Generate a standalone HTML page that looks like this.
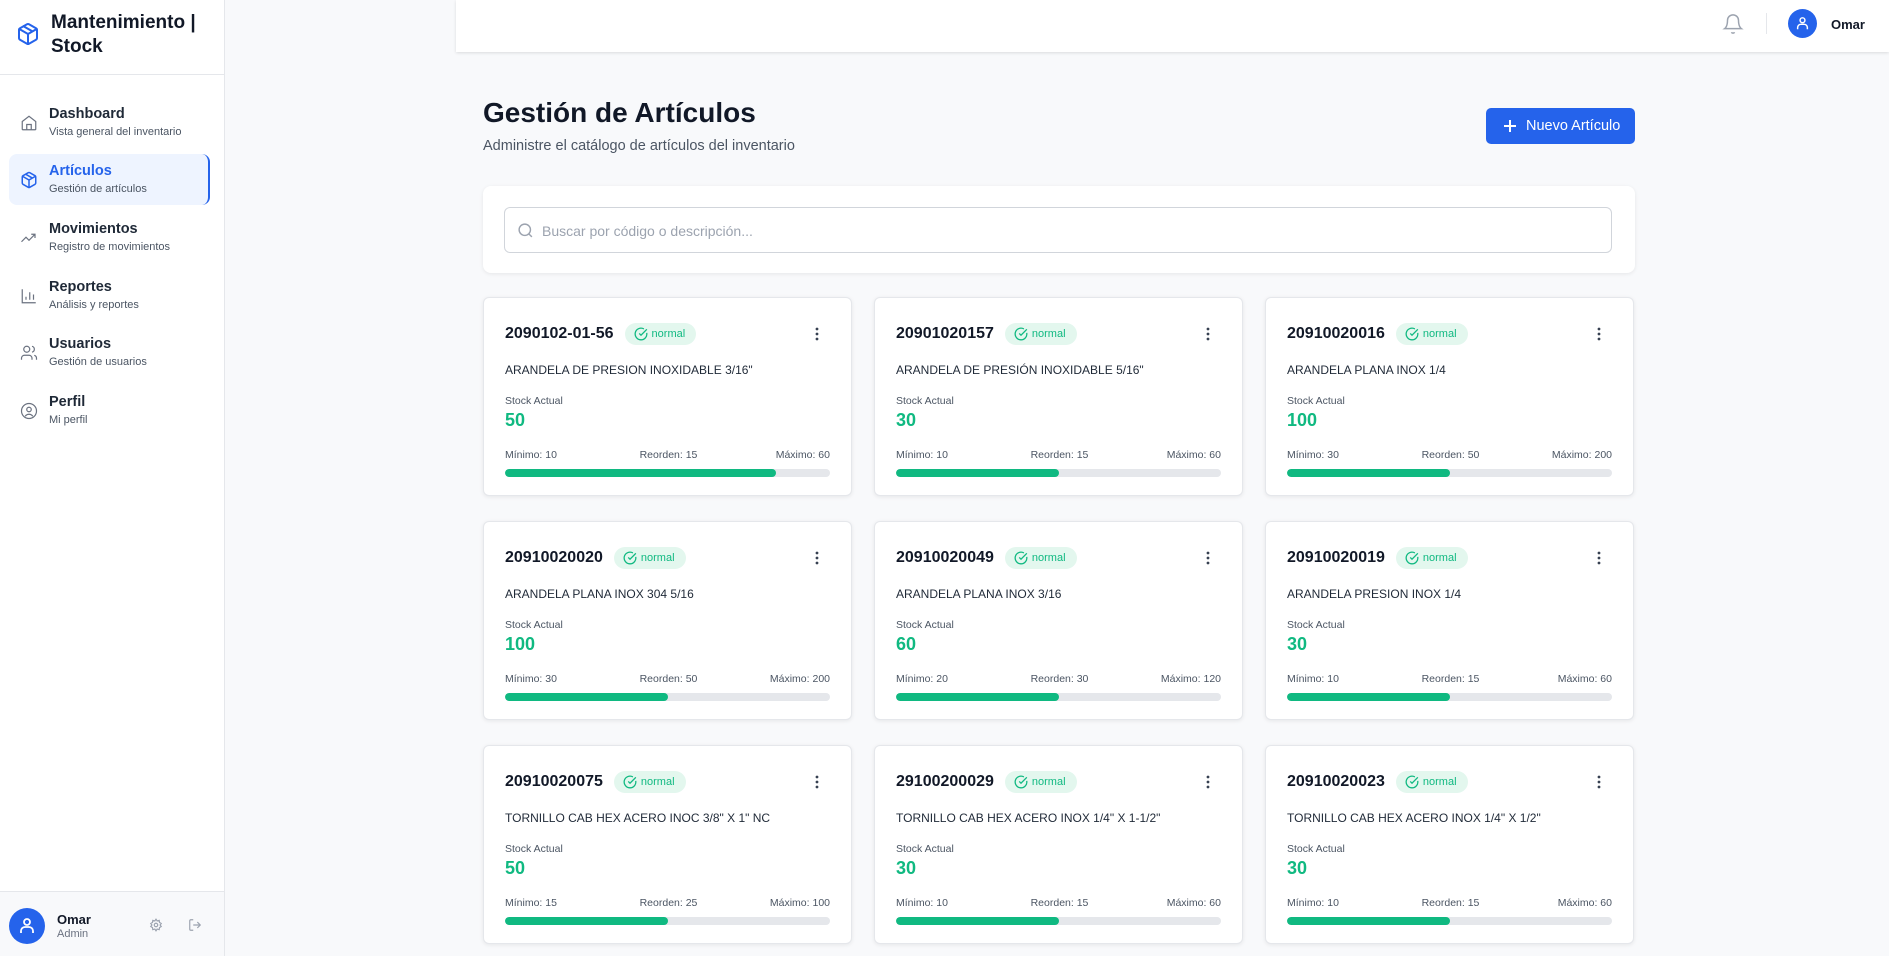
<!DOCTYPE html>
<html><head><meta charset="utf-8"><style>
*{box-sizing:border-box;margin:0;padding:0;line-height:1}
body{width:1889px;height:956px;overflow:hidden;background:#f8f9fb;font-family:"Liberation Sans",sans-serif;position:relative;color:#111827}
.side{position:absolute;left:0;top:0;width:225px;height:956px;background:#fff;border-right:1px solid #e5e7eb}
.logo{position:absolute;left:16px;top:22px}
.brand{position:absolute;left:51px;top:11px;font-size:19px;font-weight:bold;line-height:24px;color:#111827}
.div1{position:absolute;left:0;top:74px;width:224px;height:1px;background:#e5e7eb}
.nav{position:absolute;left:9px;width:201px;height:51px;border-radius:8px}
.nav.act{background:#eef4ff;border-right:2px solid #2563eb}
.nav svg{position:absolute;left:11px;top:17px}
.nav .t{position:absolute;left:40px;top:10px;font-size:14.5px;font-weight:bold;color:#1f2937}
.nav .s{position:absolute;left:40px;top:30px;font-size:11px;color:#4b5563}
.nav.act .t{color:#2563eb}
.foot{position:absolute;left:0;top:891px;width:224px;height:65px;background:#f8f9fb;border-top:1px solid #e5e7eb}
.top{position:absolute;left:456px;top:0;width:1433px;height:52px;background:#fff;box-shadow:0 1px 3px rgba(0,0,0,.12)}
h1{position:absolute;left:483px;top:99px;font-size:28px;font-weight:bold;color:#111827}
.sub{position:absolute;left:483px;top:139px;font-size:14.5px;color:#4b5563}
.btn{position:absolute;left:1486px;top:108px;width:149px;height:36px;background:#2563eb;border-radius:5px;color:#fff;font-size:14.5px}
.search{position:absolute;left:483px;top:186px;width:1152px;height:87px;background:#fff;border-radius:8px;box-shadow:0 1px 4px rgba(0,0,0,.08)}
.inp{position:absolute;left:21px;top:21px;width:1108px;height:46px;border:1px solid #d1d5db;border-radius:6px}
.card{position:absolute;width:369px;height:199px;background:#fff;border-radius:6px;border:1px solid #e5e7eb;box-shadow:0 1px 4px rgba(0,0,0,.08)}
.hd{position:absolute;left:21px;top:25px;height:22px;display:flex;align-items:center}
.code{font-size:16px;font-weight:bold;color:#111827}
.badge{position:relative;margin-left:11px;height:22px;border-radius:11px;background:#e3f7ee;color:#10b981;font-size:11px;padding:0 11px 0 27px;line-height:22px}
.badge svg{position:absolute;left:9px;top:4px}
.dots{position:absolute;left:331px;top:29px}
.desc{position:absolute;left:21px;top:66px;font-size:12px;color:#1f2937}
.sa{position:absolute;left:21px;top:98px;font-size:10.5px;color:#4b5563}
.num{position:absolute;left:21px;top:113px;font-size:18px;font-weight:bold;color:#10b981}
.lb{position:absolute;top:152px;font-size:10.5px;color:#4b5563}
.bar{position:absolute;left:21px;top:171px;width:325px;height:8px;border-radius:4px;background:#e5e7eb;overflow:hidden}
.bar i{display:block;height:8px;background:#10b981;border-radius:4px}
</style></head><body>
<div class="side">
<svg class="logo" width="24" height="24" viewBox="0 0 24 24" fill="none" stroke="#2563eb" stroke-width="2" stroke-linecap="round" stroke-linejoin="round"><path d="M21 8a2 2 0 0 0-1-1.730l-7-4a2 2 0 0 0-2 0l-7 4A2 2 0 0 0 3 8v8a2 2 0 0 0 1 1.73l7 4a2 2 0 0 0 2 0l7-4A2 2 0 0 0 21 16Z"/><path d="m3.3 7 8.7 5 8.7-5M12 22V12M7.5 4.27l9 5.15"/></svg>
<div class="brand">Mantenimiento |<br>Stock</div>
<div class="div1"></div>
<div class="nav" style="top:97px"><svg width="18" height="18" viewBox="0 0 24 24" fill="none" stroke="#6b7280" stroke-width="1.6"><path d="M3 10l9-7 9 7v10a1 1 0 0 1-1 1H4a1 1 0 0 1-1-1z"/><path d="M9 21v-7h6v7"/></svg><div class="t">Dashboard</div><div class="s">Vista general del inventario</div></div>
<div class="nav act" style="top:154px"><svg width="18" height="18" viewBox="0 0 24 24" fill="none" stroke="#2563eb" stroke-width="2"><path d="M21 8a2 2 0 0 0-1-1.73l-7-4a2 2 0 0 0-2 0l-7 4A2 2 0 0 0 3 8v8a2 2 0 0 0 1 1.73l7 4a2 2 0 0 0 2 0l7-4A2 2 0 0 0 21 16Z"/><path d="m3.3 7 8.7 5 8.7-5M12 22V12M7.5 4.27l9 5.150"/></svg><div class="t">Artículos</div><div class="s">Gestión de artículos</div></div>
<div class="nav" style="top:212px"><svg width="18" height="18" viewBox="0 0 24 24" fill="none" stroke="#6b7280" stroke-width="1.6"><path d="M2 17l6-6 4 4 8-8M15 7h5v5"/></svg><div class="t">Movimientos</div><div class="s">Registro de movimientos</div></div>
<div class="nav" style="top:270px"><svg width="18" height="18" viewBox="0 0 24 24" fill="none" stroke="#6b7280" stroke-width="1.6"><path d="M3 3v18h18M8 17v-4M13 17V7M18 17v-7"/></svg><div class="t">Reportes</div><div class="s">Análisis y reportes</div></div>
<div class="nav" style="top:327px"><svg width="18" height="18" viewBox="0 0 24 24" fill="none" stroke="#6b7280" stroke-width="1.6"><circle cx="9" cy="7" r="4"/><path d="M2 21v-2a4 4 0 0 1 4-4h6a4 4 0 0 1 4 4v2M16 3.1a4 4 0 0 1 0 7.8M22 21v-2a4 4 0 0 0-3-3.9"/></svg><div class="t">Usuarios</div><div class="s">Gestión de usuarios</div></div>
<div class="nav" style="top:385px"><svg width="18" height="18" viewBox="0 0 24 24" fill="none" stroke="#6b7280" stroke-width="1.6"><circle cx="12" cy="12" r="10"/><circle cx="12" cy="10" r="3"/><path d="M7 19a6 6 0 0 1 10 0"/></svg><div class="t">Perfil</div><div class="s">Mi perfil</div></div>
<div class="foot">
<div style="position:absolute;left:9px;top:16px;width:36px;height:36px;border-radius:50%;background:#2563eb"><svg style="position:absolute;left:10px;top:9px" width="16" height="18" viewBox="0 0 16 18" fill="none" stroke="#fff" stroke-width="1.8"><circle cx="8" cy="5" r="3"/><path d="M2 16v-2a4 4 0 0 1 4-4h4a4 4 0 0 1 4 4v2"/></svg></div>
<div style="position:absolute;left:57px;top:21px;font-size:13px;font-weight:bold">Omar</div>
<div style="position:absolute;left:57px;top:37px;font-size:11px;color:#6b7280">Admin</div>
<svg style="position:absolute;left:149px;top:26px" width="14" height="14" viewBox="0 0 24 24" fill="none" stroke="#9ca3af" stroke-width="2"><circle cx="12" cy="12" r="3"/><path d="M12 2l2 3 3.5-1 .5 3.5 3 2-2 2.5 2 2.5-3 2-.5 3.5-3.5-1-2 3-2-3-3.5 1-.5-3.5-3-2 2-2.5-2-2.5 3-2L6.5 4 10 5z"/></svg>
<svg style="position:absolute;left:188px;top:26px" width="14" height="14" viewBox="0 0 24 24" fill="none" stroke="#9ca3af" stroke-width="2"><path d="M9 21H5a2 2 0 0 1-2-2V5a2 2 0 0 1 2-2h4M16 17l5-5-5-5M21 12H9"/></svg>
</div>
</div>
<div class="top">
<svg style="position:absolute;left:1266px;top:13px" width="22" height="22" viewBox="0 0 24 24" fill="none" stroke="#9ca3af" stroke-width="1.6"><path d="M6 8a6 6 0 0 1 12 0c0 7 3 9 3 9H3s3-2 3-9M10.3 21a1.94 1.94 0 0 0 3.4 0"/></svg>
<div style="position:absolute;left:1310px;top:13px;width:1px;height:21px;background:#e5e7eb"></div>
<div style="position:absolute;left:1332px;top:9px;width:29px;height:29px;border-radius:50%;background:#2563eb"><svg style="position:absolute;left:8px;top:7px" width="13" height="15" viewBox="0 0 16 18" fill="none" stroke="#fff" stroke-width="1.8"><circle cx="8" cy="5" r="3"/><path d="M2 16v-2a4 4 0 0 1 4-4h4a4 4 0 0 1 4 4v2"/></svg></div>
<div style="position:absolute;left:1375px;top:18px;font-size:13px;font-weight:bold;color:#111827">Omar</div>
</div>
<h1>Gestión de Artículos</h1>
<div class="sub">Administre el catálogo de artículos del inventario</div>
<div class="btn"><svg style="position:absolute;left:17px;top:11px" width="14" height="14" viewBox="0 0 14 14" stroke="#fff" stroke-width="2"><path d="M7 1v12M1 7h12"/></svg><span style="position:absolute;left:40px;top:11px">Nuevo Artículo</span></div>
<div class="search"><div class="inp"><svg style="position:absolute;left:12px;top:14px" width="17" height="17" viewBox="0 0 24 24" fill="none" stroke="#9ca3af" stroke-width="2"><circle cx="11" cy="11" r="8"/><path d="m21 21-4.3-4.3"/></svg><span style="position:absolute;left:37px;top:16px;font-size:14px;color:#9ca3af">Buscar por código o descripción...</span></div></div>

<div id="cards"></div>
<script>
var d=[
["2090102-01-56","ARANDELA DE PRESION INOXIDABLE 3/16\"",50,10,15,60],
["20901020157","ARANDELA DE PRESIÓN INOXIDABLE 5/16\"",30,10,15,60],
["20910020016","ARANDELA PLANA INOX 1/4",100,30,50,200],
["20910020020","ARANDELA PLANA INOX 304 5/16",100,30,50,200],
["20910020049","ARANDELA PLANA INOX 3/16",60,20,30,120],
["20910020019","ARANDELA PRESION INOX 1/4",30,10,15,60],
["20910020075","TORNILLO CAB HEX ACERO INOC 3/8\" X 1\" NC",50,15,25,100],
["29100200029","TORNILLO CAB HEX ACERO INOX 1/4\" X 1-1/2\"",30,10,15,60],
["20910020023","TORNILLO CAB HEX ACERO INOX 1/4\" X 1/2\"",30,10,15,60]];
var xs=[483,874,1265],ys=[297,521,745],h="";
d.forEach(function(c,i){var x=xs[i%3],y=ys[Math.floor(i/3)];
h+='<div class="card" style="left:'+x+'px;top:'+y+'px"><div class="hd"><span class="code">'+c[0]+'</span><span class="badge"><svg width="14" height="14" viewBox="0 0 24 24" fill="none" stroke="#10b981" stroke-width="2.2"><path d="M21.8 10A10 10 0 1 1 17 3.3"/><path d="m9 11 3 3L22 4"/></svg>normal</span></div><svg class="dots" width="4" height="14" viewBox="0 0 4 14" fill="#374151"><circle cx="2" cy="2" r="1.4"/><circle cx="2" cy="7" r="1.4"/><circle cx="2" cy="12" r="1.4"/></svg><div class="desc">'+c[1]+'</div><div class="sa">Stock Actual</div><div class="num">'+c[2]+'</div><div class="lb" style="left:21px">Mínimo: '+c[3]+'</div><div class="lb" style="left:0;width:369px;text-align:center">Reorden: '+c[4]+'</div><div class="lb" style="right:21px">Máximo: '+c[5]+'</div><div class="bar"><i style="width:'+(c[2]/c[5]*100)+'%"></i></div></div>';});
document.getElementById("cards").innerHTML=h;
</script>
</body></html>
